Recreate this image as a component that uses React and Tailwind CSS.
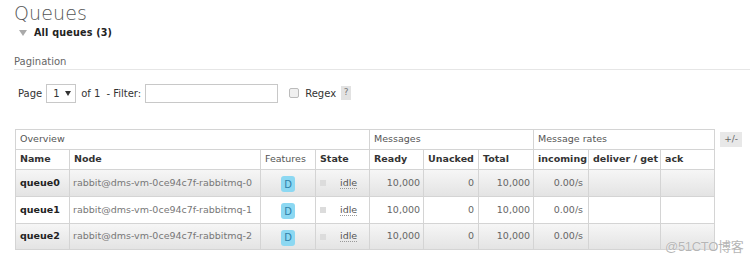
export default function App() {
  const rows = [
    { name: "queue0", node: "rabbit@dms-vm-0ce94c7f-rabbitmq-0", alt: true, h: "h-[27px]" },
    { name: "queue1", node: "rabbit@dms-vm-0ce94c7f-rabbitmq-1", alt: false, h: "h-[27px]" },
    { name: "queue2", node: "rabbit@dms-vm-0ce94c7f-rabbitmq-2", alt: true, h: "h-[26px]" },
  ];
  const cell = "border border-[#d4d4d4] px-[4px] py-0 align-middle";
  return (
    <div className="relative w-[750px] h-[258px] bg-white overflow-hidden text-[10px] text-[#444]" style={{ fontFamily: '"DejaVu Sans", Verdana, sans-serif' }}>
      <div className="pl-[14px] pt-[1px]">
        <h1 className="text-[19px] leading-[24px] font-extralight text-[#555] tracking-[0.1px]">Queues</h1>
        <div className="flex items-center h-[16px] ml-[5px] mt-[0px]">
          <svg width="8" height="6" viewBox="0 0 8 6" className="mr-[7px]"><polygon points="0,0 8,0 4,6" fill="#aaa" /></svg>
          <span className="font-bold text-[#222] text-[9.6px] tracking-[0.2px]">All queues (3)</span>
        </div>
        <div className="mt-[14px] h-[15px] leading-[14px] text-[#666] border-b border-[#e6e6e6]">Pagination</div>
        <div className="flex items-center h-[20px] mt-[13px] ml-[4px] text-[#333]">
          <span>Page</span>
          <div className="ml-[4px] w-[30px] h-[19px] border border-[#c8c8c8] flex items-center pl-[6px] gap-[5px] bg-white">
            <span>1</span>
            <svg width="6" height="5" viewBox="0 0 6 5"><polygon points="0,0 6,0 3,5" fill="#333" /></svg>
          </div>
          <span className="ml-[5px]">of 1</span>
          <span className="ml-[6px]">- Filter:</span>
          <div className="ml-[4px] w-[133px] h-[19px] border border-[#c8c8c8] bg-white"></div>
          <div className="ml-[11px] w-[10px] h-[10px] border border-[#bbb] rounded-[2px] bg-[#f0f0f0]"></div>
          <span className="ml-[6px]">Regex</span>
          <span className="ml-[5px] w-[10px] h-[14px] bg-[#e2e2e2] text-[#777] text-[9px] flex items-center justify-center">?</span>
        </div>
        <div className="flex items-start mt-[26px] ml-[1px] text-[9.5px]">
          <table className="border-collapse table-fixed w-[699px]">
            <colgroup>
              <col className="w-[54px]" />
              <col className="w-[191px]" />
              <col className="w-[55px]" />
              <col className="w-[54px]" />
              <col className="w-[54px]" />
              <col className="w-[55px]" />
              <col className="w-[55px]" />
              <col className="w-[55px]" />
              <col className="w-[72px]" />
              <col className="w-[54px]" />
            </colgroup>
            <thead>
              <tr className="h-[20px] text-[#555]">
                <th colSpan={4} className={`${cell} text-left font-normal`}>Overview</th>
                <th colSpan={3} className={`${cell} text-left font-normal`}>Messages</th>
                <th colSpan={3} className={`${cell} text-left font-normal`}>Message rates</th>
              </tr>
              <tr className="h-[20px] text-[#333]">
                <th className={`${cell} text-left font-bold`}>Name</th>
                <th className={`${cell} text-left font-bold`}>Node</th>
                <th className={`${cell} text-left font-normal text-[#555]`}>Features</th>
                <th className={`${cell} text-left font-bold`}>State</th>
                <th className={`${cell} text-left font-bold`}>Ready</th>
                <th className={`${cell} text-left font-bold`}>Unacked</th>
                <th className={`${cell} text-left font-bold`}>Total</th>
                <th className={`${cell} text-left font-bold`}>incoming</th>
                <th className={`${cell} text-left font-bold whitespace-nowrap`}>deliver / get</th>
                <th className={`${cell} text-left font-bold`}>ack</th>
              </tr>
            </thead>
            <tbody>
              {rows.map((r) => (
                <tr key={r.name} className={`${r.h} ${r.alt ? "bg-gradient-to-b from-[#f6f6f6] to-[#e3e3e3]" : "bg-white"}`}>
                  <td className={`${cell} font-bold text-[#222]`}>{r.name}</td>
                  <td className={`${cell} text-[#777] whitespace-nowrap pl-[3px]`}>{r.node}</td>
                  <td className={`${cell} text-center`}>
                    <span className="inline-flex items-center justify-center w-[14px] h-[16px] rounded-[3px] bg-[#8cd8f2] text-[#2f7fa8] text-[10px] mt-[2px]">D</span>
                  </td>
                  <td className={`${cell}`}>
                    <div className="flex items-center">
                      <span className="w-[6px] h-[6px] bg-[#dcdcdc] ml-[0px]"></span>
                      <span className="ml-[14px] text-[#555] underline decoration-dotted decoration-[#999] underline-offset-2">idle</span>
                    </div>
                  </td>
                  <td className={`${cell} text-right text-[#666] pr-[3px]`}>10,000</td>
                  <td className={`${cell} text-right text-[#666] pr-[4px]`}>0</td>
                  <td className={`${cell} text-right text-[#666] pr-[3px]`}>10,000</td>
                  <td className={`${cell} text-right text-[#666] pr-[5px]`}>0.00/s</td>
                  <td className={`${cell}`}></td>
                  <td className={`${cell}`}></td>
                </tr>
              ))}
            </tbody>
          </table>
          <div className="ml-[5px] mt-[3px] w-[22px] h-[15px] bg-[#e8e8e8] text-[#666] text-[9px] flex items-center justify-center">+/-</div>
        </div>
      </div>
      <div className="absolute left-[665px] top-[237px] text-[13px] text-[#b5b5b5] tracking-[-0.3px]" style={{ fontFamily: '"Liberation Sans", "Noto Sans CJK SC", sans-serif', textShadow: "0 0 1px #fff" }}>@51CTO博客</div>
    </div>
  );
}
